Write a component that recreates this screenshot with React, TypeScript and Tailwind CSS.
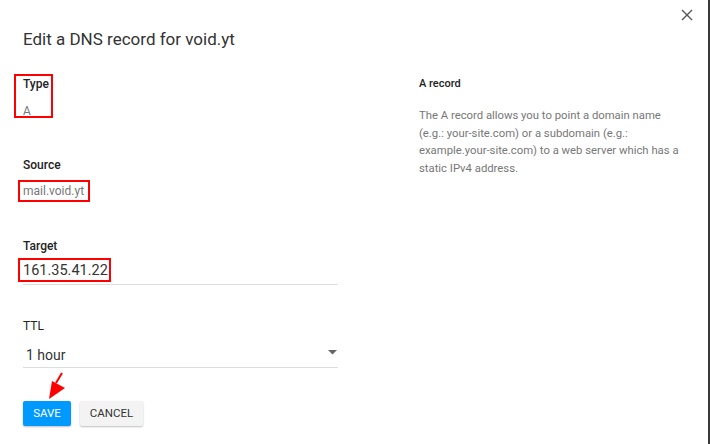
import React from "react";

export default function App() {
  return (
    <div
      className="relative w-[710px] h-[444px] overflow-hidden bg-white border-r-2 border-[#3a3a3a]"
      style={{ fontFamily: "Roboto, 'Noto Sans', sans-serif" }}
    >
      <button className="absolute right-[13px] top-[7px] w-[16px] h-[16px] flex items-center justify-center text-[#555]">
        <svg width="12" height="12" viewBox="0 0 12 12">
          <path d="M1 1 L11 11 M11 1 L1 11" stroke="#555" strokeWidth="1.4" />
        </svg>
      </button>

      <h1 className="pl-[23px] pt-[28px] text-[17px] leading-[22px] text-[#333]">
        Edit a DNS record for void.yt
      </h1>

      <div className="flex pl-[23px] mt-[26px]">
        <div className="w-[315px] flex flex-col">
          <div className="text-[12px] leading-[16px] font-medium text-[#222]">Type</div>
          <div className="mt-[11px] text-[12px] leading-[16px] text-[#777]">A</div>

          <div className="mt-[38px] text-[12px] leading-[16px] font-medium text-[#222]">Source</div>
          <div className="mt-[10px] text-[12px] leading-[16px] text-[#777]">mail.void.yt</div>

          <div className="mt-[39px] text-[12px] leading-[16px] font-medium text-[#222]">Target</div>
          <div className="mt-[8px] pb-[4px] text-[14.5px] leading-[18px] text-[#333] border-b border-[#ddd] w-[315px]">
            161.35.41.22
          </div>

          <div className="mt-[33px] text-[12px] leading-[16px] text-[#222]">TTL</div>
          <div className="mt-[13px] pb-[4px] flex items-center justify-between text-[14px] leading-[16px] text-[#333] border-b border-[#ddd]">
            <span className="pl-[3px]">1 hour</span>
            <svg width="9" height="5" viewBox="0 0 9 5" className="mr-[1px] mb-[6px]">
              <path d="M0 0 L9 0 L4.5 4.5 Z" fill="#666" />
            </svg>
          </div>

          <div className="mt-[33px] flex gap-[9px]">
            <button className="h-[25px] w-[48px] bg-[#0099ff] text-white text-[11.5px] rounded-[2px] shadow-[0_1px_2px_rgba(0,0,0,0.25)]">
              SAVE
            </button>
            <button className="h-[25px] w-[63px] bg-[#f3f3f3] text-[#333] text-[11.5px] rounded-[2px] shadow-[0_1px_2px_rgba(0,0,0,0.25)]">
              CANCEL
            </button>
          </div>
        </div>

        <div className="ml-[81px] w-[268px]">
          <div className="text-[11px] leading-[16px] font-medium text-[#222]">A record</div>
          <p className="mt-[15px] text-[11.3px] leading-[17.5px] text-[#777]">
            The A record allows you to point a domain name (e.g.: your-site.com) or a subdomain (e.g.: example.your-site.com) to a web server which has a static IPv4 address.
          </p>
        </div>
      </div>

      {/* annotations */}
      <div className="absolute left-[14px] top-[74px] w-[39px] h-[44px] border-2 border-[#ff0000]" />
      <div className="absolute left-[18px] top-[180px] w-[72px] h-[22px] border-2 border-[#ff0000]" />
      <div className="absolute left-[18px] top-[258px] w-[93px] h-[24px] border-2 border-[#ff0000]" />
      <svg className="absolute left-[40px] top-[370px]" width="28" height="32" viewBox="0 0 28 32">
        <path d="M22 3 L16 13" stroke="#ff0000" strokeWidth="2" />
        <path d="M9 29 L12 11 L25 18 Z" fill="#ff0000" />
      </svg>
    </div>
  );
}
